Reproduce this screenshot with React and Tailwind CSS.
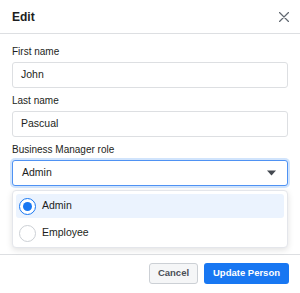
import React from 'react';

const Field = ({ label, value }) => (
  <div className="flex flex-col">
    <div className="h-[12px] leading-[12px] text-[10px] text-[#1c1e21]">{label}</div>
    <div className="mt-[4px] h-[26px] rounded-[3px] border border-[#dddfe2] bg-white flex items-center px-[8px] text-[10.5px] text-[#1c1e21]">
      {value}
    </div>
  </div>
);

const Radio = ({ checked }) =>
  checked ? (
    <div className="w-[17px] h-[17px] rounded-full border-[1.5px] border-[#1877f2] flex items-center justify-center bg-white">
      <div className="w-[9px] h-[9px] rounded-full bg-[#1877f2]"></div>
    </div>
  ) : (
    <div className="w-[17px] h-[17px] rounded-full border border-[#ccd0d5] bg-white"></div>
  );

const Option = ({ label, checked }) => (
  <div className={`h-[24px] rounded-[3px] flex items-center gap-[6px] px-[3px] ${checked ? 'bg-[#ebf3fe]' : ''}`}>
    <Radio checked={checked} />
    <span className="text-[10.5px] text-[#1c1e21]">{label}</span>
  </div>
);

export default function App() {
  return (
    <div className="w-[300px] h-[293px] bg-white overflow-hidden font-['Liberation_Sans',Arial,sans-serif]">
      <div className="h-[34px] flex items-center justify-between px-[12px] border-b border-[#dddfe2]">
        <span className="text-[12px] font-bold text-[#1c1e21]">Edit</span>
        <svg width="10" height="10" viewBox="0 0 10 10" className="mr-[-1px]">
          <path d="M0.5 0.5L9.5 9.5M9.5 0.5L0.5 9.5" stroke="#606770" strokeWidth="1.2" strokeLinecap="round" />
        </svg>
      </div>

      <div className="px-[12px] pt-[12px] flex flex-col gap-[7px] h-[220px]">
        <Field label="First name" value="John" />
        <Field label="Last name" value="Pascual" />
        <div className="flex flex-col">
          <div className="h-[12px] leading-[12px] text-[10px] text-[#1c1e21]">Business Manager role</div>
          <div className="mt-[4px] h-[26px] rounded-[3px] border border-[#4f92f3] ring-2 ring-[#1877f2]/20 bg-white flex items-center justify-between pl-[9px] pr-[11px] text-[10.5px] text-[#1c1e21]">
            <span>Admin</span>
            <svg width="9" height="6" viewBox="0 0 9 6">
              <path d="M0 0.5H9L4.5 5.5Z" fill="#444950" />
            </svg>
          </div>
          <div className="mt-[4px] rounded-[4px] border border-[#e4e6eb] bg-white shadow-[0_2px_6px_rgba(0,0,0,0.12)] px-[3px] pt-[3px] pb-[2px] flex flex-col gap-[3px]">
            <Option label="Admin" checked />
            <Option label="Employee" />
          </div>
        </div>
      </div>

      <div className="border-t border-[#dddfe2] flex justify-end items-center gap-[6px] px-[11px] pt-[8px]">
        <button className="h-[21px] w-[49px] rounded-[3px] border border-[#ccd0d5] bg-[#f5f6f7] text-[9.5px] font-bold text-[#4b4f56]">
          Cancel
        </button>
        <button className="h-[21px] w-[85px] rounded-[3px] bg-[#1877f2] text-[9.5px] font-bold text-white">
          Update Person
        </button>
      </div>
    </div>
  );
}
